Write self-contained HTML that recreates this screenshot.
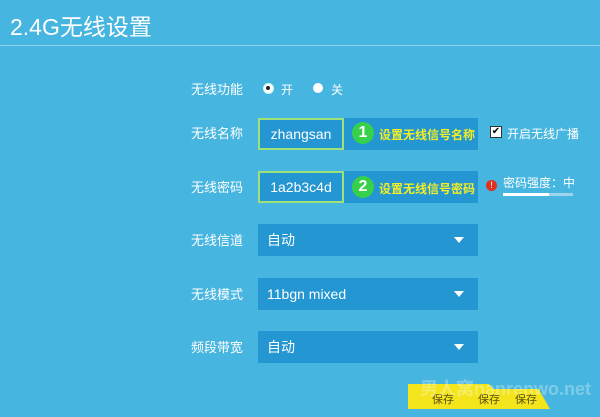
<html><head><style>
body{margin:0;width:600px;height:417px;background:#46b5df;font-family:"Liberation Sans","Noto Sans CJK SC",sans-serif;position:relative;overflow:hidden;color:#fff}
.a{position:absolute}
.lbl{font-size:13px;left:191px}
.box{background:#2497d3;left:258px;width:220px;height:32px}
.sel{font-size:14px;line-height:32px;padding-left:9px;box-sizing:border-box}
.arr{position:absolute;right:14px;top:13px;width:0;height:0;border-left:5px solid transparent;border-right:5px solid transparent;border-top:6px solid #fff}
.inp{border:2px solid #9ee07a;box-sizing:border-box;width:86px;height:32px;font-size:14px;line-height:28px;text-align:center;background:#2497d3}
.num{width:22px;height:22px;border-radius:50%;background:#37d04a;color:#fff;font-weight:bold;font-size:16px;text-align:center;line-height:22px}
.tip{color:#f4ee22;font-size:12px;font-weight:bold}
</style></head><body>
<div class="a" style="left:10px;top:8px;font-size:23px">2.4G无线设置</div>
<div class="a" style="left:0;top:45px;width:600px;height:1px;background:#8fd2ee"></div>

<div class="a lbl" style="top:79px">无线功能</div>
<div class="a" style="left:263px;top:83px;width:9px;height:9px;border-radius:50%;background:#fff;border:1px solid #cfe"></div>
<div class="a" style="left:266px;top:86px;width:4px;height:4px;border-radius:50%;background:#222"></div>
<div class="a" style="left:281px;top:81px;font-size:12px">开</div>
<div class="a" style="left:313px;top:83px;width:10px;height:10px;border-radius:50%;background:#fff"></div>
<div class="a" style="left:331px;top:81px;font-size:12px">关</div>

<div class="a lbl" style="top:123px">无线名称</div>
<div class="a box" style="top:118px"></div>
<div class="a inp" style="left:258px;top:118px">zhangsan</div>
<div class="a num" style="left:352px;top:122px">1</div>
<div class="a tip" style="left:379px;top:126px">设置无线信号名称</div>
<div class="a" style="left:490px;top:126px;width:10px;height:10px;background:#fff;border:1px solid #333;font-size:10px;line-height:10px;color:#000;text-align:center">✔</div>
<div class="a" style="left:507px;top:125px;font-size:12px">开启无线广播</div>

<div class="a lbl" style="top:177px">无线密码</div>
<div class="a box" style="top:171px"></div>
<div class="a inp" style="left:258px;top:171px">1a2b3c4d</div>
<div class="a num" style="left:352px;top:176px">2</div>
<div class="a tip" style="left:379px;top:180px">设置无线信号密码</div>
<div class="a" style="left:486px;top:180px;width:11px;height:11px;border-radius:50%;background:#e0321e;font-size:9px;line-height:11px;text-align:center">!</div>
<div class="a" style="left:503px;top:174px;font-size:12px">密码强度：中</div>
<div class="a" style="left:503px;top:193px;width:70px;height:3px;background:#9fd3ea"></div>
<div class="a" style="left:503px;top:193px;width:46px;height:3px;background:#fff"></div>

<div class="a lbl" style="top:230px">无线信道</div>
<div class="a box sel" style="top:224px">自动<div class="arr"></div></div>
<div class="a lbl" style="top:284px">无线模式</div>
<div class="a box sel" style="top:278px">11bgn mixed<div class="arr"></div></div>
<div class="a lbl" style="top:337px">频段带宽</div>
<div class="a box sel" style="top:331px">自动<div class="arr"></div></div>

<div class="a" style="left:408px;top:384px;width:142px;height:25px;background:#f3e41c;clip-path:polygon(0 0,57% 0,60% 20%,92% 20%,100% 100%,0 100%)"></div>
<div class="a" style="left:432px;top:391px;font-size:11px;color:#5a5010">保存</div>
<div class="a" style="left:478px;top:391px;font-size:11px;color:#5a5010">保存</div>
<div class="a" style="left:515px;top:391px;font-size:11px;color:#5a5010">保存</div>
<div class="a" style="left:420px;top:375px;font-size:18px;color:rgba(255,255,255,.3);font-weight:bold">男人窝nanrenwo.net</div>
</body></html>
